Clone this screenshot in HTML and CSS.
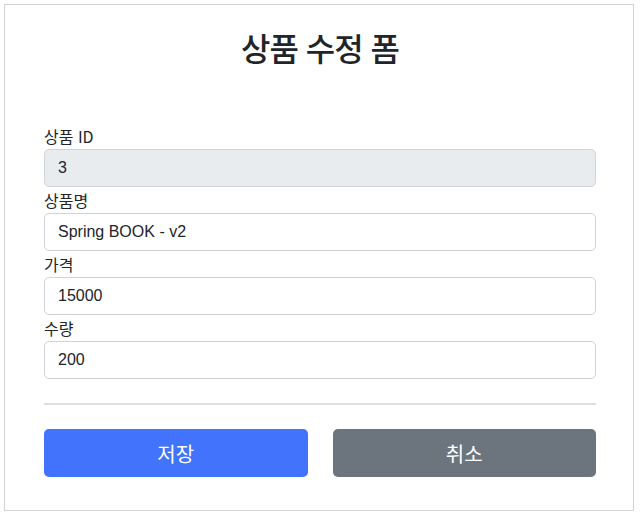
FILE: index.html
```html
<!DOCTYPE html>
<html lang="ko">
<head>
<meta charset="utf-8">
<title>상품 수정 폼</title>
<link rel="stylesheet" href="styles.css">
</head>
<body>
<div class="frame">
  <h2 class="title">상품 수정 폼</h2>
  <form class="form">
    <div class="group">
      <label class="label" for="id">상품 ID</label>
      <input class="control" id="id" type="text" value="3" disabled>
    </div>
    <div class="group">
      <label class="label" for="name">상품명</label>
      <input class="control" id="name" type="text" value="Spring BOOK - v2">
    </div>
    <div class="group">
      <label class="label" for="price">가격</label>
      <input class="control" id="price" type="text" value="15000">
    </div>
    <div class="group">
      <label class="label" for="qty">수량</label>
      <input class="control" id="qty" type="text" value="200">
    </div>
    <hr class="divider">
    <div class="actions">
      <button class="btn btn-primary" type="submit">저장</button>
      <button class="btn btn-secondary" type="button">취소</button>
    </div>
  </form>
</div>
</body>
</html>
```

FILE: styles.css
```css
* { box-sizing: border-box; }
html, body { margin: 0; padding: 0; background: #fff; }
body {
  font-family: "Liberation Sans", "Noto Sans CJK KR", sans-serif;
  color: #212529;
}
.frame {
  margin: 4px 0 0 4px;
  width: 630px;
  height: 507px;
  border: 1px solid #d4d4d4;
  padding: 0 37px 0 39px;
}
.title {
  margin: 22px 0 0;
  height: 40px;
  line-height: 40px;
  text-align: center;
  font-family: "Noto Sans CJK KR", sans-serif;
  font-size: 32px;
  font-weight: 500;
  letter-spacing: -1px;
  color: #212529;
}
.form { margin-top: 56px; display: flex; flex-direction: column; }
.group { display: flex; flex-direction: column; }
.label {
  display: block;
  height: 26px;
  line-height: 26px;
  font-family: "Noto Sans CJK KR", sans-serif;
  font-size: 16px;
  color: #212529;
}
.control {
  display: block;
  width: 100%;
  height: 38px;
  padding: 0 13px;
  border: 1px solid #ced4da;
  border-radius: 5px;
  background: #fff;
  font-family: "Liberation Sans", "Noto Sans CJK KR", sans-serif;
  font-size: 16px;
  color: #212529;
  outline: none;
}
.control:disabled { background: #e9ecef; color: #212529; opacity: 1; }
.divider {
  margin: 24px 0 0;
  border: 0;
  height: 2px;
  background: #dedede;
}
.actions {
  margin-top: 24px;
  display: grid;
  grid-template-columns: 1fr 1fr;
  gap: 25px;
}
.btn {
  height: 48px;
  border: 0;
  border-radius: 5px;
  color: #fff;
  font-family: "Noto Sans CJK KR", sans-serif;
  font-size: 20px;
  cursor: pointer;
}
.btn-primary { background: #4173fc; }
.btn-secondary { background: #6c757d; }
```
